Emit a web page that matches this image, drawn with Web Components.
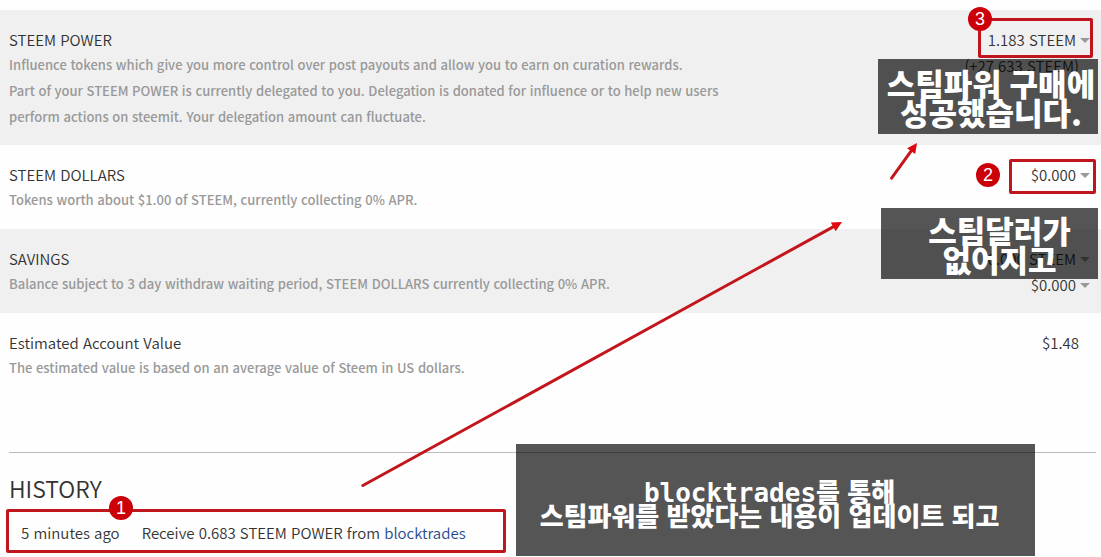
<!DOCTYPE html>
<html lang="ko">

<head>
  <meta charset="UTF-8">
  <title>Wallet</title>
  <meta name="viewport" content="width=device-width,initial-scale=1">
  <style>
    body {
      margin: 0;
      background: #fefefe;
      color: #333;
      font-family: "Noto Sans CJK KR", "Noto Sans", sans-serif;
      font-size: 15px;
      line-height: 26px;
    }
  </style>
</head>

<body>
  <wallet-page>
    <wallet-row shaded>
      <span slot="name">STEEM POWER</span>
      Influence tokens which give you more control over post payouts and allow you to earn on curation rewards.<br>
      Part of your STEEM POWER is currently delegated to you. Delegation is donated for influence or to help new users perform actions on steemit. Your delegation amount can fluctuate.
      <wallet-amount slot="amount" menu>1.183 STEEM</wallet-amount>
      <wallet-amount slot="amount">(+27.633 STEEM)</wallet-amount>
    </wallet-row>
    <wallet-row>
      <span slot="name">STEEM DOLLARS</span>
      Tokens worth about $1.00 of STEEM, currently collecting 0% APR.
      <wallet-amount slot="amount" menu>$0.000</wallet-amount>
    </wallet-row>
    <wallet-row shaded>
      <span slot="name">SAVINGS</span>
      Balance subject to 3 day withdraw waiting period, STEEM DOLLARS currently collecting 0% APR.
      <wallet-amount slot="amount" menu>0.000 STEEM</wallet-amount>
      <wallet-amount slot="amount" menu>$0.000</wallet-amount>
    </wallet-row>
    <wallet-row>
      <span slot="name">Estimated Account Value</span>
      The estimated value is based on an average value of Steem in US dollars.
      <wallet-amount slot="amount">$1.48</wallet-amount>
    </wallet-row>
    <wallet-history></wallet-history>

    <mark-note slot="notes" style="top: 59px; right: 3px; width: 220px; height: 75px; padding-left: 6px">스팀파워 구매에<br>성공했습니다.</mark-note>
    <mark-note slot="notes" style="top: 208px; right: 3px; width: 217px; height: 71px; padding-left: 20px">스팀달러가<br>없어지고</mark-note>
    <mark-note slot="notes" small style="top: 444px; left: 516px; width: 519px; height: 112px"><b>blocktrades</b>를 통해<br>스팀파워를 받았다는 내용이 업데이트 되고</mark-note>

    <mark-frame slot="notes" style="top: 18px; right: 8px; width: 115px; height: 40px"></mark-frame>
    <mark-frame slot="notes" style="top: 159px; right: 5px; width: 87px; height: 35px"></mark-frame>
    <mark-frame slot="notes" style="top: 509px; left: 6px; width: 500px; height: 44px"></mark-frame>

    <mark-arrow slot="notes" dx="480" dy="264" style="top: 222px; left: 362px"></mark-arrow>
    <mark-arrow slot="notes" dx="26" dy="36" style="top: 143px; right: 184px"></mark-arrow>

    <mark-number slot="notes" style="top: 7px; right: 109px">3</mark-number>
    <mark-number slot="notes" style="top: 163px; right: 101px">2</mark-number>
    <mark-number slot="notes" style="top: 496px; left: 109px">1</mark-number>
  </wallet-page>
</body>

<script>
  class WalletPage extends HTMLElement {
    constructor() {
      super();
      this.attachShadow({mode: "open"});

      this.shadowRoot.innerHTML = `
        <main><slot></slot></main>
        <slot name="notes"></slot>
        <style>
          :host {
            display: block;
            position: relative;
            box-sizing: border-box;
            min-height: 100vh;
            padding-top: 10px;
            overflow: hidden;
          }

          ::slotted([slot="notes"]) {
            position: absolute;
            box-sizing: border-box;
          }
        </style>
      `;
    }
  }

  class WalletRow extends HTMLElement {
    constructor() {
      super();
      this.attachShadow({mode: "open"});

      this.shadowRoot.innerHTML = `
        <div class="info">
          <div class="name"><slot name="name"></slot></div>
          <div class="description"><slot></slot></div>
        </div>
        <div class="amounts"><slot name="amount"></slot></div>
        <style>
          :host {
            display: grid;
            grid-template-columns: 2fr 1fr;
            padding: 17px 9px 15px;
          }

          :host([shaded]) {
            background: #f0f0f0;
          }

          .info {
            min-height: 52px;
          }

          .name {
            line-height: 25px;
            font-weight: 350;
          }

          .description {
            color: #999;
            font-size: 13px;
            font-weight: 500;
          }

          .amounts {
            display: flex;
            flex-direction: column;
            align-items: flex-end;
          }
        </style>
      `;
    }
  }

  class WalletAmount extends HTMLElement {
    constructor() {
      super();
      this.attachShadow({mode: "open"});

      const content = this.hasAttribute("menu")
        ? `<button type="button"><slot></slot><i></i></button>`
        : `<slot></slot>`;

      this.shadowRoot.innerHTML = `
        ${content}
        <style>
          :host {
            display: block;
            padding-right: 13px;
            font-weight: 350;
          }

          :host([menu]) {
            padding-right: 2px;
          }

          button {
            display: flex;
            align-items: center;
            gap: 4px;
            padding: 0;
            border: 0;
            background: none;
            color: inherit;
            font: inherit;
            cursor: pointer;
          }

          i {
            border: 5px solid transparent;
            border-top-color: #999;
            border-bottom: 0;
          }
        </style>
      `;
    }
  }

  class WalletHistory extends HTMLElement {
    constructor() {
      super();
      this.attachShadow({mode: "open"});

      this.shadowRoot.innerHTML = `
        <hr>
        <h4>HISTORY</h4>
        <table>
          <tr>
            <td>5 minutes ago</td>
            <td>Receive 0.683 STEEM POWER from <a href="#blocktrades">blocktrades</a></td>
          </tr>
        </table>
        <style>
          :host {
            display: block;
            padding: 55px 5px 0 9px;
            font-weight: 350;
          }

          hr {
            margin: 0 0 19px;
            border: 0;
            border-top: 1px solid #bbb;
          }

          h4 {
            margin: 0 0 16px;
            font-size: 23px;
            font-weight: 350;
            line-height: 32px;
          }

          table {
            border-collapse: collapse;
          }

          td {
            padding: 0 10px 0 12px;
          }

          a {
            color: #1f4a8c;
            text-decoration: none;
          }
        </style>
      `;
    }
  }

  class MarkNote extends HTMLElement {
    constructor() {
      super();
      this.attachShadow({mode: "open"});

      this.shadowRoot.innerHTML = `
        <p><slot></slot></p>
        <style>
          :host {
            display: grid;
            place-items: center;
            border: 1px solid rgba(90, 90, 90, 0.3);
            background: rgba(0, 0, 0, 0.665);
            color: #fff;
            font-size: 31px;
            font-weight: 900;
            line-height: 29px;
            text-align: center;
            white-space: nowrap;
          }

          :host([small]) {
            padding: 6px 12px 0 0;
            font-size: 26px;
            line-height: 24px;
          }

          p {
            margin: 0;
          }

          ::slotted(b) {
            font-family: "DejaVu Sans Mono", monospace;
            font-weight: 700;
            line-height: 0;
          }
        </style>
      `;
    }
  }

  class MarkFrame extends HTMLElement {
    constructor() {
      super();
      this.attachShadow({mode: "open"});

      this.shadowRoot.innerHTML = `
        <style>
          :host {
            display: block;
            border: 3px solid #bf161d;
            border-radius: 2px;
          }
        </style>
      `;
    }
  }

  class MarkNumber extends HTMLElement {
    constructor() {
      super();
      this.attachShadow({mode: "open"});

      this.shadowRoot.innerHTML = `
        <slot></slot>
        <style>
          :host {
            width: 24px;
            height: 24px;
            border-radius: 50%;
            background: #cb0009;
            color: #fff;
            font: 18px/24px "Liberation Sans", sans-serif;
            text-align: center;
          }
        </style>
      `;
    }
  }

  // Arrow from the bottom left to the top right of a dx by dy box
  class MarkArrow extends HTMLElement {
    constructor() {
      super();
      this.attachShadow({mode: "open"});

      const dx = Number(this.getAttribute("dx"));
      const dy = Number(this.getAttribute("dy"));
      const length = Math.hypot(dx, dy);
      const angle = -Math.atan2(dy, dx) * 180 / Math.PI;

      this.shadowRoot.innerHTML = `
        <svg width="${dx}" height="${dy}" aria-hidden="true">
          <g transform="translate(0 ${dy}) rotate(${angle})">
            <path d="M1 0H${length - 8}" stroke="#c3161c" stroke-width="3" stroke-linecap="round"/>
            <path d="M${length} 0l-10 -5v10z" fill="#e0080e"/>
          </g>
        </svg>
        <style>
          :host {
            display: block;
            pointer-events: none;
          }

          svg {
            display: block;
            overflow: visible;
          }
        </style>
      `;
    }
  }

  customElements.define("wallet-page", WalletPage);
  customElements.define("wallet-row", WalletRow);
  customElements.define("wallet-amount", WalletAmount);
  customElements.define("wallet-history", WalletHistory);
  customElements.define("mark-note", MarkNote);
  customElements.define("mark-frame", MarkFrame);
  customElements.define("mark-number", MarkNumber);
  customElements.define("mark-arrow", MarkArrow);
</script>

</html>
